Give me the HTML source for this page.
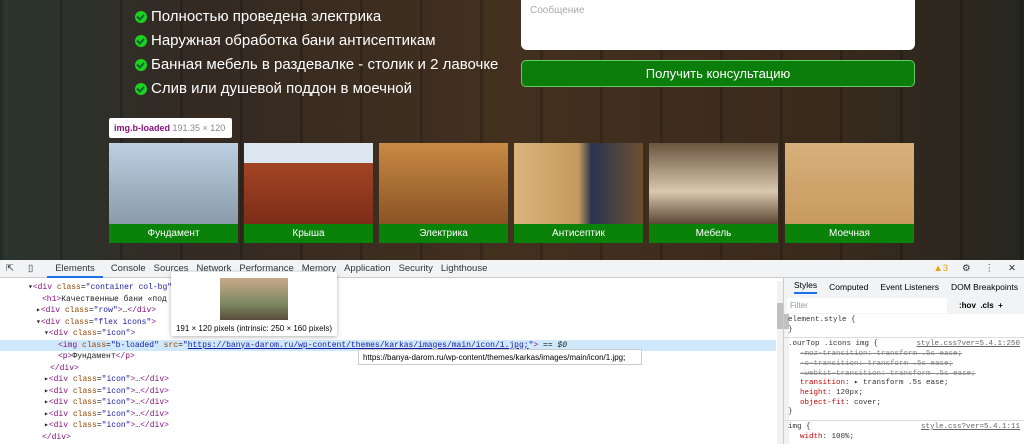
<!DOCTYPE html>
<html><head><meta charset="utf-8"><style>
*{margin:0;padding:0;box-sizing:border-box}
body{width:1024px;height:444px;overflow:hidden;font-family:"Liberation Sans",sans-serif;background:#fff;position:relative}
.top{position:absolute;left:0;top:0;width:1024px;height:260px;background:linear-gradient(90deg,#2a3530 0%,#342a22 20%,#43301f 50%,#3a2a1c 80%,#262620 100%)}
.top:after{content:"";position:absolute;inset:0;background:repeating-linear-gradient(90deg,rgba(0,0,0,.18) 0 3px,transparent 3px 60px)}
.li{position:absolute;left:135px;color:#fff;font-size:15px;display:flex;align-items:center;z-index:2}
.li i{width:12px;height:12px;border-radius:50%;background:#1fd11f;margin-right:4px;position:relative}
.li i:after{content:"";position:absolute;left:3px;top:2px;width:3px;height:5px;border:solid #063;border-width:0 2px 2px 0;transform:rotate(45deg)}
.msg{position:absolute;left:521px;top:0;width:394px;height:50px;background:#fff;border-radius:0 0 6px 6px;color:#aaa;font-size:10px;padding:5px 9px;z-index:2}
.btn{position:absolute;left:521px;top:60px;width:394px;height:27px;background:#0b7d0b;border:1px solid #6c6;border-radius:5px;color:#fff;font-size:13px;text-align:center;line-height:25px;z-index:2}
.tile{position:absolute;top:143px;width:129px;height:100px;z-index:2}
.tile div{height:81px}
.tile p{height:19px;background:#0a820a;color:#fff;font-size:10px;text-align:center;line-height:19px}
.tip{position:absolute;left:109px;top:118px;width:123px;height:20px;background:#fff;border-radius:2px;font-size:9px;padding:5px 5px;z-index:3}
.dt{position:absolute;left:0;top:260px;width:1024px;height:184px;background:#fff}
.bar{height:18px;background:#f1f3f4;border-bottom:1px solid #ccc;font-size:9.5px;color:#333;display:flex;align-items:center;white-space:nowrap}
.bar span{margin-right:8px}
.code{font-family:"Liberation Mono",monospace;font-size:8px;line-height:11.5px;color:#222;position:absolute;left:0;top:22px;width:776px;white-space:nowrap}
.tg{color:#881280}.at{color:#994500}.av{color:#1a1aa6}
.right{position:absolute;left:783px;top:18px;width:241px;height:166px;border-left:1px solid #ccc;white-space:nowrap;overflow:hidden}
.pr{color:#c80000}
</style></head><body>
<div class="top"></div>
<div class="li" style="top:8px"><i></i>Полностью проведена электрика</div>
<div class="li" style="top:32px"><i></i>Наружная обработка бани антисептикам</div>
<div class="li" style="top:56px"><i></i>Банная мебель в раздевалке - столик и 2 лавочке</div>
<div class="li" style="top:80px"><i></i>Слив или душевой поддон в моечной</div>
<div class="msg">Сообщение</div>
<div class="btn">Получить консультацию</div>
<div class="tip"><b style="color:#881280">img.b-loaded</b> <span style="color:#888">191.35 × 120</span></div>
<div class="tile" style="left:109px"><div style="background:linear-gradient(#bcd0e2,#8a9aa8)"></div><p>Фундамент</p></div>
<div class="tile" style="left:244px"><div style="background:linear-gradient(#dbe6f0 0 25%,#a34425 25%,#7d2d18)"></div><p>Крыша</p></div>
<div class="tile" style="left:379px"><div style="background:linear-gradient(#c98a45,#8a5324)"></div><p>Электрика</p></div>
<div class="tile" style="left:514px"><div style="background:linear-gradient(90deg,#d9b47c,#c59a60 50%,#2a3450 60%,#6d5030)"></div><p>Антисептик</p></div>
<div class="tile" style="left:649px"><div style="background:linear-gradient(#6b5640,#d9c8b0 60%,#5a4632)"></div><p>Мебель</p></div>
<div class="tile" style="left:785px"><div style="background:linear-gradient(#d6b07a,#c89a60)"></div><p>Моечная</p></div>
<div class="dt">
<div class="bar"><span style="margin-left:6px;margin-right:14px">⇱</span><span style="margin-right:14px">▯</span><span style="border-bottom:2px solid #1a73e8;padding:3px 8px 2px">Elements</span><span>Console</span><span>Sources</span><span>Network</span><span>Performance</span><span>Memory</span><span>Application</span><span>Security</span><span>Lighthouse</span><span style="margin-left:auto;color:#e8a400;margin-right:14px">▲3</span><span style="margin-right:14px">⚙</span><span style="margin-right:14px">⋮</span><span>✕</span></div>
<div class="code">
<div style="padding-left:28px">▾<span class="tg">&lt;div</span> <span class="at">class</span>=<span class="av">"container col-bg"</span><span class="tg">&gt;</span></div>
<div style="padding-left:42px"><span class="tg">&lt;h1&gt;</span>Качественные бани «под кл</div>
<div style="padding-left:36px">▸<span class="tg">&lt;div</span> <span class="at">class</span>=<span class="av">"row"</span><span class="tg">&gt;</span>…<span class="tg">&lt;/div&gt;</span></div>
<div style="padding-left:36px">▾<span class="tg">&lt;div</span> <span class="at">class</span>=<span class="av">"flex icons"</span><span class="tg">&gt;</span></div>
<div style="padding-left:44px">▾<span class="tg">&lt;div</span> <span class="at">class</span>=<span class="av">"icon"</span><span class="tg">&gt;</span></div>
<div style="padding-left:58px;background:#cfe8fc"><span class="tg">&lt;img</span> <span class="at">class</span>=<span class="av">"b-loaded"</span> <span class="at">src</span>=<span class="av">"<u>https://banya-darom.ru/wp-content/themes/karkas/images/main/icon/1.jpg;</u>"</span><span class="tg">&gt;</span> == <i>$0</i></div>
<div style="padding-left:58px"><span class="tg">&lt;p&gt;</span>Фундамент<span class="tg">&lt;/p&gt;</span></div>
<div style="padding-left:50px"><span class="tg">&lt;/div&gt;</span></div>
<div style="padding-left:44px">▸<span class="tg">&lt;div</span> <span class="at">class</span>=<span class="av">"icon"</span><span class="tg">&gt;</span>…<span class="tg">&lt;/div&gt;</span></div>
<div style="padding-left:44px">▸<span class="tg">&lt;div</span> <span class="at">class</span>=<span class="av">"icon"</span><span class="tg">&gt;</span>…<span class="tg">&lt;/div&gt;</span></div>
<div style="padding-left:44px">▸<span class="tg">&lt;div</span> <span class="at">class</span>=<span class="av">"icon"</span><span class="tg">&gt;</span>…<span class="tg">&lt;/div&gt;</span></div>
<div style="padding-left:44px">▸<span class="tg">&lt;div</span> <span class="at">class</span>=<span class="av">"icon"</span><span class="tg">&gt;</span>…<span class="tg">&lt;/div&gt;</span></div>
<div style="padding-left:44px">▸<span class="tg">&lt;div</span> <span class="at">class</span>=<span class="av">"icon"</span><span class="tg">&gt;</span>…<span class="tg">&lt;/div&gt;</span></div>
<div style="padding-left:42px"><span class="tg">&lt;/div&gt;</span></div>
</div>
<div style="position:absolute;left:171px;top:12px;width:166px;height:64px;background:#fff;box-shadow:0 1px 4px rgba(0,0,0,.3);border-radius:2px;font-size:8px;text-align:center"><div style="width:68px;height:42px;margin:6px auto 4px;background:linear-gradient(#c9a98a,#7d8a62 60%,#5a4c3c)"></div>191 × 120 pixels (intrinsic: 250 × 160 pixels)</div>
<div style="position:absolute;left:358px;top:89px;width:284px;height:16px;background:#fff;border:1px solid #ccc;font-size:8px;padding:3px 4px">https://banya-darom.ru/wp-content/themes/karkas/images/main/icon/1.jpg;</div>
<div style="position:absolute;left:777px;top:21px;width:12px;height:163px;background:#f1f1f1"><div style="margin-top:22px;height:26px;background:#c1c1c1"></div></div>
<div class="right">
<div style="height:18px;background:#f1f3f4;font-size:8.5px;display:flex;align-items:center;gap:12px;padding-left:10px"><span style="border-bottom:2px solid #1a73e8;padding-bottom:2px">Styles</span><span>Computed</span><span>Event Listeners</span><span>DOM Breakpoints</span></div>
<div style="height:18px;background:#f1f3f4;font-size:8px;display:flex;align-items:center"><span style="background:#fff;width:160px;margin-left:3px;padding:3px;color:#999">Filter</span><b style="margin-left:12px">:hov &nbsp;.cls &nbsp;+</b></div>
<div style="font-family:'Liberation Mono',monospace;font-size:7.5px;line-height:9.7px;padding:2px 4px;color:#333">
<div>element.style {<br>}</div><div style="border-top:1px solid #ddd;margin:2px -4px;"></div>
<div>.ourTop .icons img { <span style="float:right;text-decoration:underline;color:#666">style.css?ver=5.4.1:250</span></div>
<div style="padding-left:12px;color:#888;text-decoration:line-through">-moz-transition: transform .5s ease;<br>-o-transition: transform .5s ease;<br>-webkit-transition: transform .5s ease;</div>
<div style="padding-left:12px"><span class="pr">transition</span>: ▸ transform .5s ease;<br><span class="pr">height</span>: 120px;<br><span class="pr">object-fit</span>: cover;</div>
<div>}</div><div style="border-top:1px solid #ddd;margin:2px -4px;"></div>
<div>img { <span style="float:right;text-decoration:underline;color:#666">style.css?ver=5.4.1:11</span></div>
<div style="padding-left:12px"><span class="pr">width</span>: 100%;</div>
</div></div>
</div>
</body></html>
